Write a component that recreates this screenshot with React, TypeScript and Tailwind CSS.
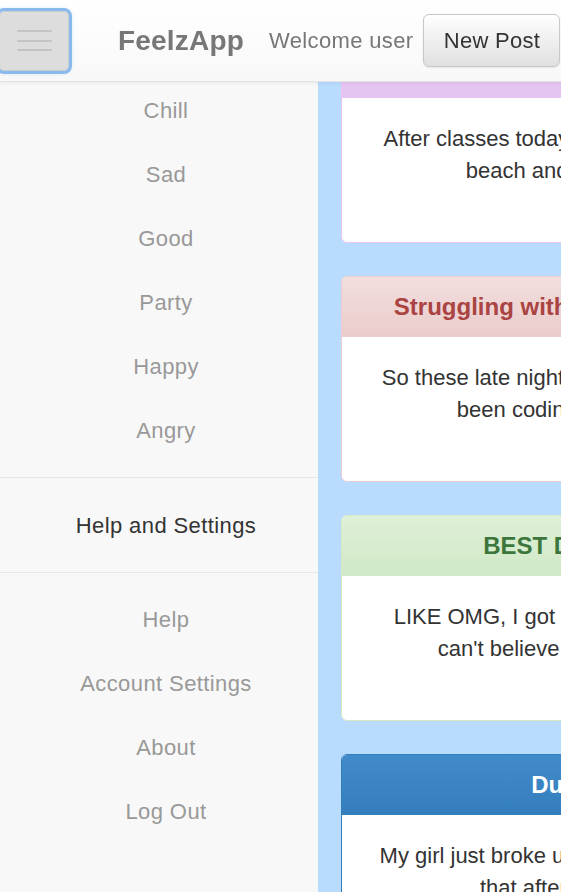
import React from "react";

type Card = {
  title: string;
  headerClass: string;
  titleClass: string;
  borderClass: string;
  lines: string[];
};

const cards: Card[] = [
  {
    title: "Chillin at the beach",
    headerClass: "bg-[#e6c4f1]",
    titleClass: "text-[#8a4fa0]",
    borderClass: "border-[#eac5f2]",
    lines: ["After classes today, my buddies and I hit the", "beach and surfed until dark"],
  },
  {
    title: "Struggling with sleep deprivation :((",
    headerClass: "bg-gradient-to-b from-[#f2dede] to-[#ebcccc]",
    titleClass: "text-[#a94442]",
    borderClass: "border-[#ebccd1]",
    lines: ["So these late nights are really killing me. I've", "been coding until 3am, daily.."],
  },
  {
    title: "BEST DAY EVER!!!!!",
    headerClass: "bg-gradient-to-b from-[#dff0d8] to-[#d0e9c6]",
    titleClass: "text-[#3c763d]",
    borderClass: "border-[#d6e9c6]",
    lines: ["LIKE OMG, I got the huge internship and I", "can't believe it!!!! I'm so excited!!!"],
  },
  {
    title: "Dumped :(((",
    headerClass: "bg-gradient-to-b from-[#428bca] to-[#357ebd]",
    titleClass: "text-white",
    borderClass: "border-[#357ebd]",
    lines: ["My girl just broke up with me, and I found out", "that after a year she left."],
  },
];

const moods = ["Chill", "Sad", "Good", "Party", "Happy", "Angry"];
const settings = ["Help", "Account Settings", "About", "Log Out"];

export default function App() {
  return (
    <div
      className="relative w-[561px] h-[892px] overflow-hidden bg-[#b9dbfe]"
      style={{ fontFamily: '"Liberation Sans", Arial, sans-serif' }}
    >
      {/* fixed navbar */}
      <header className="fixed top-0 left-0 z-10 w-[561px] h-[82px] flex items-center bg-gradient-to-b from-white to-[#f8f8f8] border-b border-[#e3e3e3] shadow-[0_1px_4px_rgba(0,0,0,0.07)]">
        <button className="ml-[-1px] w-[70px] h-[60px] rounded-[5px] bg-[#dddddd] border border-[#cccccc] flex flex-col items-center justify-center gap-[7.5px] outline outline-[3px] outline-[#8ab9ee] shadow-[0_0_6px_rgba(102,175,233,0.6)]">
          <span className="block w-[35px] h-[2px] bg-[#c4c4c4] rounded" />
          <span className="block w-[35px] h-[2px] bg-[#c4c4c4] rounded" />
          <span className="block w-[35px] h-[2px] bg-[#c4c4c4] rounded" />
        </button>
        <span className="ml-[49px] text-[28px] font-bold text-[#777777] leading-none tracking-[0.2px]">FeelzApp</span>
        <span className="ml-[25px] text-[22px] text-[#777777] leading-none tracking-[0.35px]">Welcome user</span>
        <button className="ml-[10px] w-[137px] h-[53px] rounded-[6px] border border-[#c8c8c8] bg-gradient-to-b from-white to-[#e0e0e0] text-[22px] text-[#333333] tracking-[0.3px] shadow-[0_1px_2px_rgba(0,0,0,0.08)]">
          New Post
        </button>
      </header>

      <div className="flex">
        {/* sidebar */}
        <aside className="w-[318px] shrink-0 h-[892px] bg-[#f8f8f8] text-[22px] tracking-[0.4px]">
          <ul className="pt-[78px] pb-[15px] pl-[14px] border-b border-[#e7e7e7]">
            {moods.map((m) => (
              <li key={m} className="h-16 flex items-center justify-center text-[#999999]">
                {m}
              </li>
            ))}
          </ul>
          <div className="h-[95px] pl-[14px] flex items-center justify-center text-[#333333] border-b border-[#e7e7e7]">
            Help and Settings
          </div>
          <ul className="pt-[14px] pl-[14px]">
            {settings.map((s) => (
              <li key={s} className="h-16 flex items-center justify-center text-[#999999]">
                {s}
              </li>
            ))}
          </ul>
        </aside>

        {/* main content */}
        <main className="flex-1 overflow-hidden pt-[37px]">
          <div className="flex flex-col gap-[33px] pl-[23px]">
            {cards.map((c) => (
              <div
                key={c.title}
                className={`w-[515px] shrink-0 rounded-[6px] border bg-white overflow-hidden ${c.borderClass}`}
              >
                <div
                  className={`h-[60px] flex items-center justify-center text-[24px] font-bold whitespace-nowrap ${c.headerClass} ${c.titleClass}`}
                >
                  {c.title}
                </div>
                <div className="h-[144px] pt-[25px] text-center text-[22px] leading-[32px] text-[#333333] whitespace-nowrap">
                  {c.lines.map((l) => (
                    <div key={l}>{l}</div>
                  ))}
                </div>
              </div>
            ))}
          </div>
        </main>
      </div>
    </div>
  );
}
